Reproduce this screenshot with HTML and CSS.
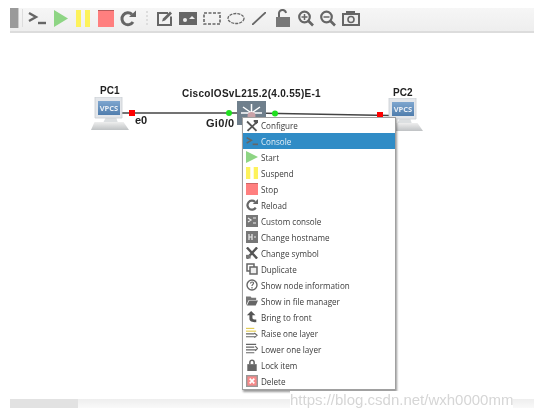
FILE: index.html
```html
<!DOCTYPE html>
<html lang="en">
<head>
    <meta charset="UTF-8">
    <title>GNS3 topology</title>
    <link rel="stylesheet" href="styles.css">
</head>
<body>
    <svg class="defs" width="0" height="0">
        <defs>
            <linearGradient id="screen" x1="0" y1="0" x2="0" y2="1">
                <stop offset="0" stop-color="#7ea6cf"/>
                <stop offset="1" stop-color="#4f7dad"/>
            </linearGradient>
            <linearGradient id="base" x1="0" y1="0" x2="0" y2="1">
                <stop offset="0" stop-color="#eeeeee"/>
                <stop offset="1" stop-color="#bfc2c4"/>
            </linearGradient>
        </defs>
        <symbol id="i-console" viewBox="0 0 18 14">
            <path d="M1 2l7 4-7 4" fill="none" stroke="#666" stroke-width="2.4"/>
            <path d="M10 12h8" stroke="#666" stroke-width="2.4"/>
        </symbol>
        <symbol id="i-start" viewBox="0 0 14 16" preserveAspectRatio="none"><path d="M0 0l14 8-14 8z" fill="#8ed584"/></symbol>
        <symbol id="i-suspend" viewBox="0 0 14 16" preserveAspectRatio="none">
            <path d="M0 0h5v16H0zM9 0h5v16H9z" fill="#fdf25b"/>
        </symbol>
        <symbol id="i-stop" viewBox="0 0 16 16" preserveAspectRatio="none">
            <path d="M0 0h16v16H0z" fill="#ff7f7f"/>
            <path d="M0 0h16v.8H0z" fill="#a55"/>
        </symbol>
        <symbol id="i-reload" viewBox="0 0 16 16">
            <path d="M13 11.500A6 6 0 1 1 12 3.800" fill="none" stroke="#666" stroke-width="3"/>
            <path d="M9 6.500h7V0z" fill="#666"/>
        </symbol>
        <symbol id="i-note" viewBox="0 0 16 16">
            <path d="M1 2.500h10M1 1.500v13h13V6" fill="none" stroke="#666" stroke-width="2"/>
            <path d="M5 11l1-3 7-7 2 2-7 7z" fill="#666"/>
        </symbol>
        <symbol id="i-image" viewBox="0 0 18 13">
            <path d="M0 0h18v13H0z" fill="#666"/>
            <circle cx="6" cy="8" r="2" fill="#eee"/>
            <path d="M10 7l3-3 3 3z" fill="#eee"/>
        </symbol>
        <symbol id="i-rect" viewBox="0 0 18 13">
            <path d="M1 1h16v11H1z" fill="none" stroke="#666" stroke-width="1.600" stroke-dasharray="3 1.500"/>
        </symbol>
        <symbol id="i-ellipse" viewBox="0 0 18 12">
            <ellipse cx="9" cy="6" rx="8" ry="5" fill="none" stroke="#666" stroke-width="1.300" stroke-dasharray="3 1"/>
        </symbol>
        <symbol id="i-line" viewBox="0 0 14 13"><path d="M0 13L14 0" stroke="#666" stroke-width="1.800"/></symbol>
        <symbol id="i-unlock" viewBox="0 0 14 18">
            <path d="M3 8V5a3.500 3.500 0 0 1 7-1" fill="none" stroke="#666" stroke-width="2"/>
            <path d="M0 8h14v10H0z" fill="#777"/>
        </symbol>
        <symbol id="i-zoomin" viewBox="0 0 16 16">
            <circle cx="6.500" cy="6.500" r="5.300" fill="none" stroke="#666" stroke-width="2.200"/>
            <path d="M10 10l5 5" stroke="#666" stroke-width="2.600"/>
            <path d="M3.500 6.500h6M6.500 3.500v6" stroke="#666" stroke-width="1.500"/>
        </symbol>
        <symbol id="i-zoomout" viewBox="0 0 16 16">
            <circle cx="6.500" cy="6.500" r="5.300" fill="none" stroke="#666" stroke-width="2.200"/>
            <path d="M10 10l5 5" stroke="#666" stroke-width="2.600"/>
            <path d="M3.500 6.500h6" stroke="#666" stroke-width="1.500"/>
        </symbol>
        <symbol id="i-camera" viewBox="0 0 18 15">
            <path d="M1 3h16v11H1z" fill="#eee" stroke="#666" stroke-width="2"/>
            <path d="M4 0h9v3H4z" fill="#666"/>
            <circle cx="9" cy="8.500" r="3" fill="none" stroke="#666" stroke-width="1.600"/>
        </symbol>
        <symbol id="i-tools" viewBox="0 0 14 14">
            <path d="M2 1l11 11-1.500 1.500L.5 2.500z" fill="#555"/>
            <path d="M13 1L1 12l1.500 1.500L13 3.500z" fill="#555"/>
            <path d="M9 0h5v3l-2 2-3-3z" fill="#555"/>
        </symbol>
        <symbol id="i-custom" viewBox="0 0 12 12">
            <path d="M0 0h12v12H0z" fill="#777"/>
            <path d="M2 3l3 2-3 2M7 8h3M7 3h3" fill="none" stroke="#eee" stroke-width="1.200"/>
        </symbol>
        <symbol id="i-hostname" viewBox="0 0 12 12">
            <path d="M0 0h12v12H0z" fill="#777"/>
            <path d="M3 3v6M3 6h3M6 3v6M8 6h2" fill="none" stroke="#eee" stroke-width="1.200"/>
        </symbol>
        <symbol id="i-symbol" viewBox="0 0 13 12">
            <path d="M1 0l11 12M12 0L1 12" stroke="#555" stroke-width="2.600"/>
            <path d="M0 8h5v4H0z" fill="#777"/>
        </symbol>
        <symbol id="i-duplicate" viewBox="0 0 12 12">
            <path d="M1 1h7v7H1z" fill="none" stroke="#666" stroke-width="1.500"/>
            <path d="M4 4h7v7H4z" fill="#eee" stroke="#666" stroke-width="1.500"/>
        </symbol>
        <symbol id="i-info" viewBox="0 0 12 12">
            <circle cx="6" cy="6" r="5" fill="none" stroke="#666" stroke-width="1.400"/>
            <path d="M4.500 4.500c0-2 3.500-2 3 0-.3 1-1.500 1-1.500 2.500M6 8v1.500" fill="none" stroke="#666" stroke-width="1.200"/>
        </symbol>
        <symbol id="i-folder" viewBox="0 0 13 10">
            <path d="M0 0h5l1 1.500h5V4H3L0 10z" fill="#777"/>
            <path d="M3.500 4.500H13L10.500 10H1z" fill="#666"/>
        </symbol>
        <symbol id="i-front" viewBox="0 0 12 14">
            <path d="M5 0L0 5h3v4c0 3 3 4 8 4v-3c-3 0-4.500 0-4.500-2V5H10z" fill="#555"/>
        </symbol>
        <symbol id="i-raise" viewBox="0 0 13 12">
            <path d="M0 1h9" stroke="#e0c94a" stroke-width="1.200"/>
            <path d="M0 4h11" stroke="#e0c94a" stroke-width="1.200"/>
            <path d="M0 7h9M0 10h11M9 6l3 2.500-3 2.500" fill="none" stroke="#666" stroke-width="1.200"/>
        </symbol>
        <symbol id="i-lower" viewBox="0 0 13 12">
            <path d="M0 1h11M0 4h9M0 7h11M0 10h9M10 3l2.500 2.500L10 8" fill="none" stroke="#666" stroke-width="1.200"/>
        </symbol>
        <symbol id="i-lock" viewBox="0 0 11 14">
            <path d="M3 6V4a2.500 2.500 0 0 1 5 0v2" fill="none" stroke="#666" stroke-width="1.800"/>
            <path d="M0 6h11v8H0z" fill="#666"/>
        </symbol>
        <symbol id="i-delete" viewBox="0 0 13 13">
            <path d="M0 0h13v13H0z" fill="#999"/>
            <path d="M1.500 1.500h10v10h-10z" fill="#f78a8a"/>
            <path d="M4 4l5 5M9 4l-5 5" stroke="#fff" stroke-width="1.800"/>
        </symbol>
        <symbol id="i-vpcs" viewBox="0 0 38 33">
            <path d="M15 20h10l2 6H12z" fill="#dcdfe1"/>
            <path d="M4 0h27v21H4z" fill="#e3e6ea" stroke="#c9cdd2" stroke-width=".8"/>
            <path d="M0 33l3.500-8h29l5.500 8z" fill="url(#base)"/>
            <path d="M7 4h22v14H7z" fill="url(#screen)"/>
        </symbol>
    </svg>

    <div class="page">
        <div class="toolbar">
            <span class="grip"></span>
            <span class="sep"></span>
            <svg class="tb-console"><use href="#i-console"/></svg>
            <svg class="tb-start"><use href="#i-start"/></svg>
            <svg class="tb-start"><use href="#i-suspend"/></svg>
            <svg class="tb-stop"><use href="#i-stop"/></svg>
            <svg class="tb-stop"><use href="#i-reload"/></svg>
            <span class="dots"></span>
            <svg class="tb-stop"><use href="#i-note"/></svg>
            <svg class="tb-wide"><use href="#i-image"/></svg>
            <svg class="tb-wide"><use href="#i-rect"/></svg>
            <svg class="tb-wide"><use href="#i-ellipse"/></svg>
            <svg class="tb-line"><use href="#i-line"/></svg>
            <svg class="tb-lock"><use href="#i-unlock"/></svg>
            <svg class="tb-stop"><use href="#i-zoomin"/></svg>
            <svg class="tb-stop"><use href="#i-zoomout"/></svg>
            <svg class="tb-wide"><use href="#i-camera"/></svg>
        </div>

        <div class="canvas">
            <svg class="links" width="548" height="417">
                <path d="M122 113H250" stroke="#444" stroke-width="1.500"/>
                <path d="M250 113L390 115.500" stroke="#444" stroke-width="1.500"/>
                <rect x="129" y="110" width="6" height="6" fill="#f00"/>
                <circle cx="229" cy="113" r="3" fill="#1fe01f"/>
                <circle cx="275" cy="113.500" r="3" fill="#1fe01f"/>
                <rect x="377" y="112" width="6" height="6" fill="#f00"/>
            </svg>

            <div class="node node-pc1"><svg class="pc"><use href="#i-vpcs"/></svg><span class="vpcs">VPCS</span></div>
            <div class="node node-pc2"><svg class="pc"><use href="#i-vpcs"/></svg><span class="vpcs">VPCS</span></div>
            <svg class="switch" viewBox="0 0 29 24">
                <path d="M0 0h29v24H0z" fill="#6f7f8c"/>
                <path d="M14.500 12V3M14.500 12L6 6M14.500 12L23 6M14.500 12H4M14.500 12H25" stroke="#fff" stroke-width="1.500"/>
                <circle cx="14.500" cy="15" r="4" fill="#c9a2a8"/>
            </svg>

            <span class="label label-pc1">PC1</span>
            <span class="label label-pc2">PC2</span>
            <span class="label label-router">CiscoIOSvL215.2(4.0.55)E-1</span>
            <span class="label label-e0">e0</span>
            <span class="label label-gi">Gi0/0</span>

            <ul class="menu">
                <li><svg><use href="#i-tools"/></svg>Configure</li>
                <li class="active"><svg><use href="#i-console"/></svg>Console</li>
                <li><svg><use href="#i-start"/></svg>Start</li>
                <li><svg><use href="#i-suspend"/></svg>Suspend</li>
                <li><svg><use href="#i-stop"/></svg>Stop</li>
                <li><svg><use href="#i-reload"/></svg>Reload</li>
                <li><svg><use href="#i-custom"/></svg>Custom console</li>
                <li><svg><use href="#i-hostname"/></svg>Change hostname</li>
                <li><svg><use href="#i-symbol"/></svg>Change symbol</li>
                <li><svg><use href="#i-duplicate"/></svg>Duplicate</li>
                <li><svg><use href="#i-info"/></svg>Show node information</li>
                <li><svg><use href="#i-folder"/></svg>Show in file manager</li>
                <li><svg><use href="#i-front"/></svg>Bring to front</li>
                <li><svg><use href="#i-raise"/></svg>Raise one layer</li>
                <li><svg><use href="#i-lower"/></svg>Lower one layer</li>
                <li><svg><use href="#i-lock"/></svg>Lock item</li>
                <li><svg><use href="#i-delete"/></svg>Delete</li>
            </ul>

            <div class="scrollbar"><span class="thumb"></span></div>
            <span class="watermark">https://blog.csdn.net/wxh0000mm</span>
        </div>
    </div>
</body>
</html>
```

FILE: styles.css
```css
html, body {
    margin: 0;
    padding: 0;
    background: #fff;
    overflow: hidden;
}
.defs {
    position: absolute;
}
.page {
    width: 548px;
    height: 417px;
    padding-top: 8px;
    box-sizing: border-box;
    font-family: 'Open Sans', sans-serif;
    color: #333;
    filter: blur(0.35px);
}
.toolbar {
    display: flex;
    align-items: center;
    box-sizing: border-box;
    width: 524px;
    height: 25px;
    margin-left: 10px;
    padding-bottom: 3px;
    background: linear-gradient(#f6f6f6, #eeeeee);
    border-bottom: 2px solid #dcdcdc;
}
.toolbar svg {
    flex: none;
}
.grip {
    width: 9px;
    height: 20px;
    background: #9a9a9a;
    border-right: 1px solid #ccc;
    box-sizing: border-box;
}
.sep {
    width: 1px;
    height: 18px;
    margin: 0 5px 0 3px;
    background: #ddd;
}
.tb-console {
    width: 18px;
    height: 14px;
    margin: 0 8px 0 0;
}
.tb-start {
    width: 14px;
    height: 17px;
    margin-right: 8px;
}
.tb-stop {
    width: 16px;
    height: 17px;
    margin-right: 6px;
}
.dots {
    width: 2px;
    height: 14px;
    margin: 0 7px 0 4px;
    border-left: 2px dotted #ddd;
}
.tb-wide {
    width: 18px;
    height: 15px;
    margin-right: 6px;
}
.tb-line {
    width: 14px;
    height: 13px;
    margin: 0 10px 0 1px;
}
.tb-lock {
    width: 14px;
    height: 18px;
    margin-right: 8px;
}
.canvas {
    position: absolute;
    inset: 0;
}
.links {
    position: absolute;
    left: 0;
    top: 0;
}
.node {
    position: absolute;
    width: 38px;
    height: 33px;
}
.node-pc1 {
    left: 91px;
    top: 97px;
}
.node-pc2 {
    left: 385px;
    top: 98px;
}
.pc {
    width: 38px;
    height: 33px;
    display: block;
}
.vpcs {
    position: absolute;
    left: 7px;
    top: 5px;
    width: 22px;
    font-size: 7.5px;
    line-height: 12px;
    font-weight: 700;
    text-align: center;
    color: #e8eef5;
}
.switch {
    position: absolute;
    left: 237px;
    top: 101px;
    width: 29px;
    height: 24px;
}
.label {
    position: absolute;
    font-family: 'Liberation Sans', sans-serif;
    font-size: 10px;
    line-height: 12px;
    font-weight: 700;
    color: #222;
    white-space: nowrap;
}
.label-pc1 {
    left: 100px;
    top: 85px;
}
.label-pc2 {
    left: 393px;
    top: 87px;
}
.label-router {
    left: 182px;
    top: 88px;
    letter-spacing: 0.3px;
}
.label-e0 {
    left: 135px;
    top: 114px;
    font-size: 11px;
}
.label-gi {
    left: 206px;
    top: 117px;
    font-size: 11px;
    letter-spacing: 0.3px;
}
.menu {
    position: absolute;
    left: 242px;
    top: 117px;
    width: 154px;
    margin: 0;
    padding: 0;
    box-sizing: border-box;
    list-style: none;
    background: #fff;
    border: 1px solid #a0a0a0;
    box-shadow: 1px 2px 2px rgba(0, 0, 0, 0.4);
    font-size: 8.1px;
}
.menu li {
    display: flex;
    align-items: center;
    height: 16px;
    white-space: nowrap;
    color: #3a3a3a;
}
.menu li:first-child {
    height: 15px;
}
.menu li svg {
    flex: none;
    width: 12px;
    height: 12px;
    margin: 0 3px 0 3px;
}
.menu li.active {
    background: #308cc6;
    color: #e4eef6;
}
.scrollbar {
    position: absolute;
    left: 10px;
    top: 399px;
    width: 524px;
    height: 9px;
    background: linear-gradient(#eeeeee, #f9f9f9);
}
.thumb {
    display: block;
    width: 68px;
    height: 9px;
    background: #e2e2e2;
}
.watermark {
    position: absolute;
    left: 290px;
    top: 391px;
    font-family: 'Liberation Sans', sans-serif;
    font-size: 15px;
    line-height: 17px;
    color: #d6d6d6;
    background: #fff;
    white-space: nowrap;
}
```
